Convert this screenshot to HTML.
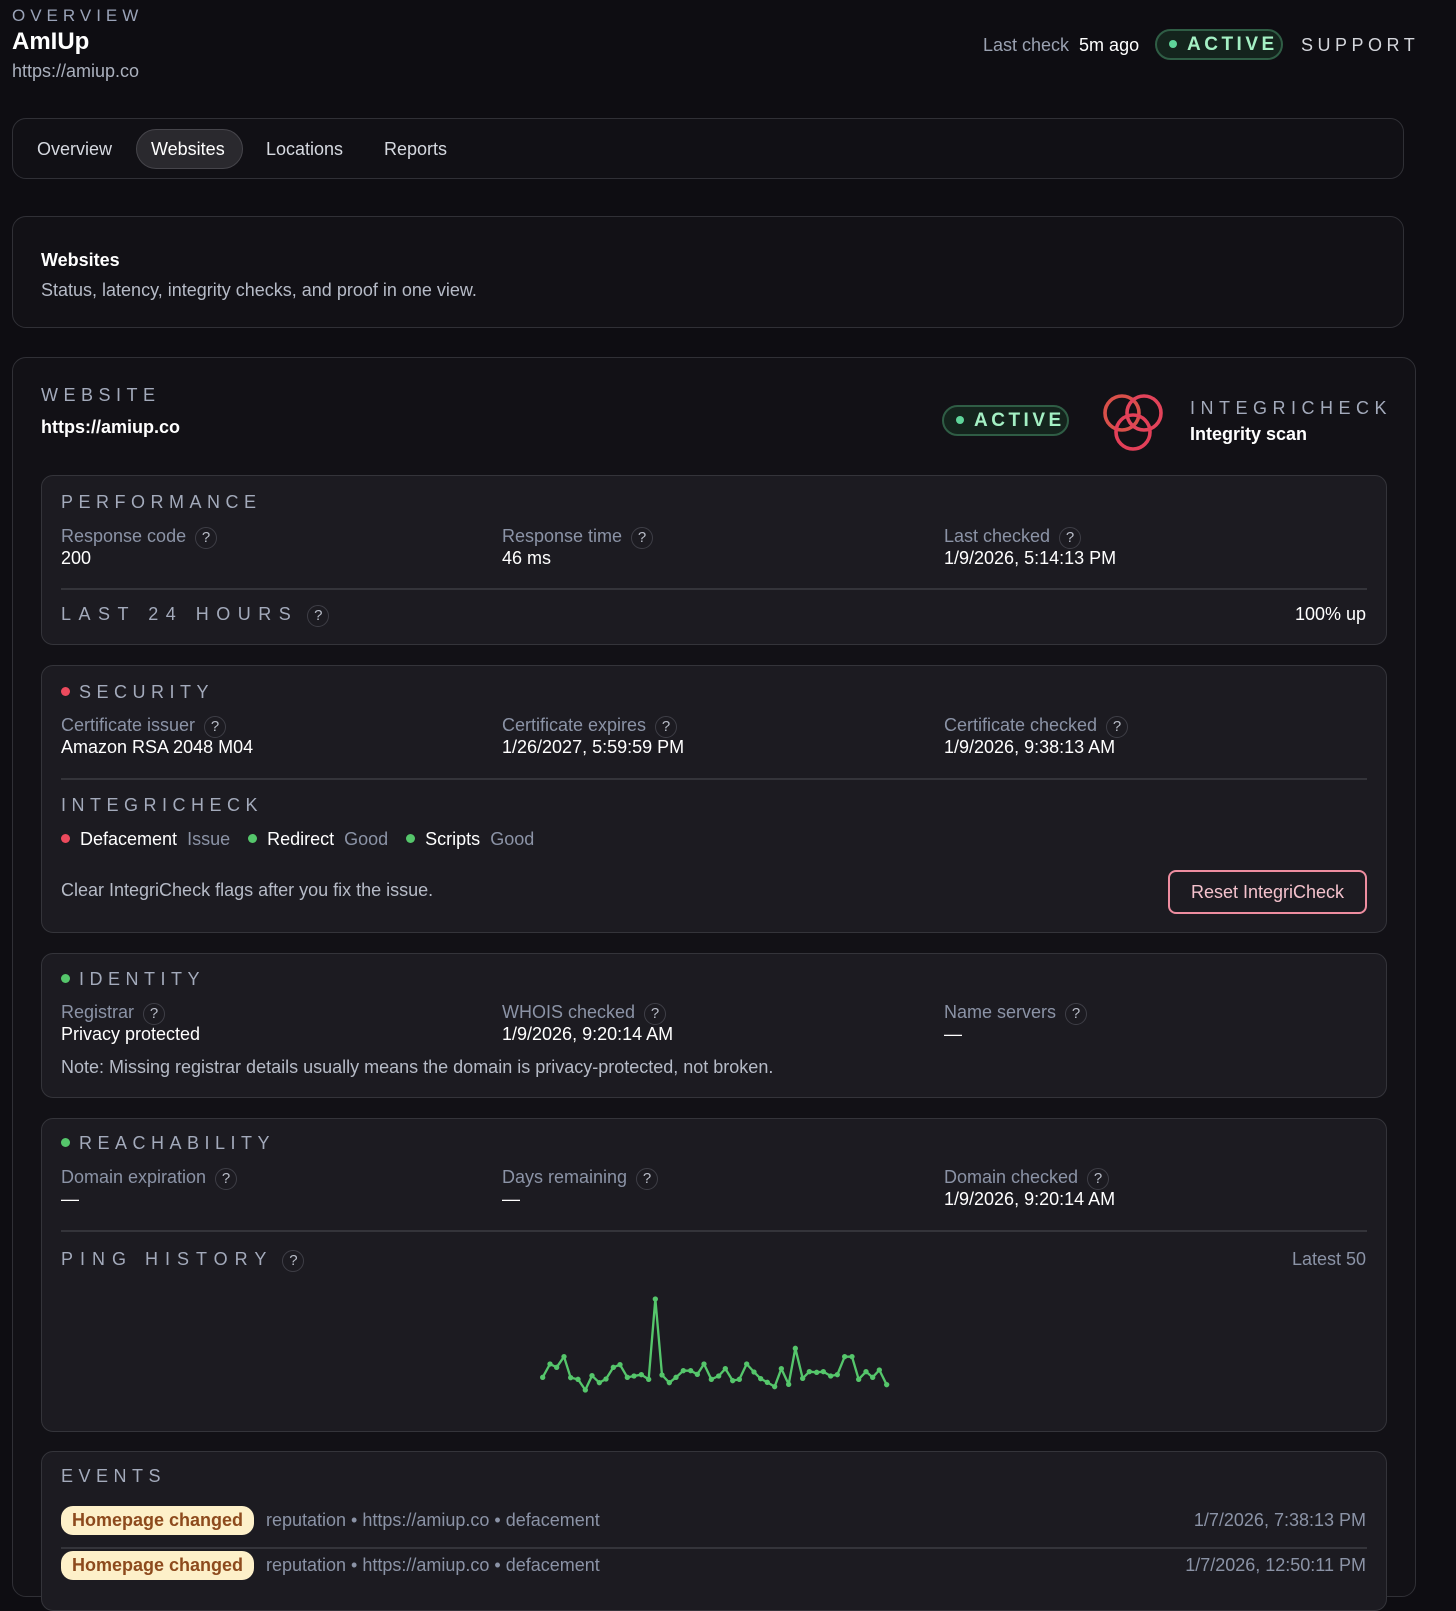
<!DOCTYPE html>
<html><head><meta charset="utf-8">
<style>
*{box-sizing:border-box;margin:0;padding:0}
body{width:1456px;height:1574px;overflow:hidden;background:#0e0d12;font-family:"Liberation Sans",sans-serif;color:#fff;position:relative}
.a{position:absolute;white-space:nowrap}
.lbl{color:#8b93a6;font-size:18px}
.val{color:#fff;font-size:18px}
.cap{color:#a3aabb;font-size:18px;letter-spacing:5.5px}
.q{display:inline-block;width:22px;height:22px;border:1.5px solid #3e3e46;border-radius:50%;color:#b9bdc8;font-size:15px;text-align:center;line-height:19px;margin-left:9px;vertical-align:0px;letter-spacing:0}
.box{position:absolute;border:1.5px solid #303036;border-radius:14px}
.sec{position:absolute;left:41px;width:1346px;background:#1c1b21;border:1.5px solid #34343a;border-radius:12px}
.hr{position:absolute;left:61px;width:1306px;height:2px;background:#34343a}
.dot{display:inline-block;width:9px;height:9px;border-radius:50%;margin-right:10px;vertical-align:2px}
.badge{position:absolute;border:2px solid #2f5d45;background:#14241d;border-radius:16px;color:#a4f0c4;font-weight:bold;font-size:19px;letter-spacing:3.5px}
.pill{position:absolute;left:61px;background:#fdf0c9;color:#8d4a1d;font-weight:bold;font-size:18px;border-radius:12px;padding:4px 11px}
</style></head><body>
<div class="a" style="left:12px;top:6px;font-size:17px;letter-spacing:5px;color:#9aa3b8">OVERVIEW</div>
<div class="a" style="left:12px;top:28px;font-size:24px;font-weight:bold">AmIUp</div>
<div class="a" style="left:12px;top:61px;font-size:18px;color:#aab0bd">https://amiup.co</div>
<div class="a" style="left:983px;top:35px;font-size:18px;color:#9aa1b1">Last check <span style="color:#fff;margin-left:5px">5m ago</span></div>
<div class="badge" style="left:1155px;top:29px;width:128px;height:31px;padding:3px 0 0 12px"><span class="dot" style="background:#5fd49a;width:8px;height:8px"></span>ACTIVE</div>
<div class="a" style="left:1301px;top:35px;font-size:18px;letter-spacing:4.5px;color:#d4d6dc">SUPPORT</div>

<div class="box" style="left:12px;top:118px;width:1392px;height:61px;background:#111015"></div>
<div class="a" style="left:136px;top:129px;width:107px;height:40px;background:#2a292e;border:1.5px solid #46454b;border-radius:20px"></div>
<div class="a" style="left:37px;top:139px;font-size:18px;color:#d6d9e0">Overview</div>
<div class="a" style="left:151px;top:139px;font-size:18px;color:#fff">Websites</div>
<div class="a" style="left:266px;top:139px;font-size:18px;color:#d6d9e0">Locations</div>
<div class="a" style="left:384px;top:139px;font-size:18px;color:#d6d9e0">Reports</div>

<div class="box" style="left:12px;top:216px;width:1392px;height:112px;background:#121116"></div>
<div class="a" style="left:41px;top:250px;font-size:18px;font-weight:bold">Websites</div>
<div class="a" style="left:41px;top:280px;font-size:18px;color:#b6bbc7">Status, latency, integrity checks, and proof in one view.</div>

<div class="box" style="left:12px;top:357px;width:1404px;height:1240px;background:#121116"></div>
<div class="a cap" style="left:41px;top:385px;color:#a3aabb">WEBSITE</div>
<div class="a" style="left:41px;top:417px;font-size:18px;font-weight:bold">https://amiup.co</div>
<div class="badge" style="left:942px;top:405px;width:127px;height:31px;padding:3px 0 0 12px"><span class="dot" style="background:#5fd49a;width:8px;height:8px"></span>ACTIVE</div>
<svg class="a" style="left:1100px;top:392px" width="66" height="62" viewBox="0 0 66 62" fill="none" stroke-width="3.6">
<circle cx="22" cy="21" r="17" stroke="#d9504a"/><circle cx="44" cy="21" r="17" stroke="#e2435a"/><circle cx="33" cy="40" r="17" stroke="#e23f58"/></svg>
<div class="a cap" style="left:1190px;top:398px;letter-spacing:5.5px">INTEGRICHECK</div>
<div class="a" style="left:1190px;top:424px;font-size:18px;font-weight:bold">Integrity scan</div>

<div class="sec" style="top:475px;height:170px"></div>
<div class="a cap" style="left:61px;top:492px">PERFORMANCE</div>
<div class="a lbl" style="left:61px;top:526px">Response code<span class="q">?</span></div>
<div class="a val" style="left:61px;top:548px">200</div>
<div class="a lbl" style="left:502px;top:526px">Response time<span class="q">?</span></div>
<div class="a val" style="left:502px;top:548px">46 ms</div>
<div class="a lbl" style="left:944px;top:526px">Last checked<span class="q">?</span></div>
<div class="a val" style="left:944px;top:548px">1/9/2026, 5:14:13 PM</div>
<div class="hr" style="top:588px"></div>
<div class="a cap" style="left:61px;top:604px;letter-spacing:7.5px">LAST 24 HOURS<span class="q">?</span></div>
<div class="a val" style="right:90px;top:604px">100% up</div>

<div class="sec" style="top:665px;height:268px"></div>
<div class="a cap" style="left:61px;top:682px"><span class="dot" style="background:#ec4a5d;margin-right:9px"></span>SECURITY</div>
<div class="a lbl" style="left:61px;top:715px">Certificate issuer<span class="q">?</span></div>
<div class="a val" style="left:61px;top:737px">Amazon RSA 2048 M04</div>
<div class="a lbl" style="left:502px;top:715px">Certificate expires<span class="q">?</span></div>
<div class="a val" style="left:502px;top:737px">1/26/2027, 5:59:59 PM</div>
<div class="a lbl" style="left:944px;top:715px">Certificate checked<span class="q">?</span></div>
<div class="a val" style="left:944px;top:737px">1/9/2026, 9:38:13 AM</div>
<div class="hr" style="top:778px"></div>
<div class="a cap" style="left:61px;top:795px">INTEGRICHECK</div>
<div class="a val" style="left:61px;top:829px"><span class="dot" style="background:#ec4a5d"></span>Defacement <span style="color:#8b93a6;margin-left:5px">Issue</span><span class="dot" style="background:#55c66b;margin-left:18px"></span>Redirect <span style="color:#8b93a6;margin-left:5px">Good</span><span class="dot" style="background:#55c66b;margin-left:18px"></span>Scripts <span style="color:#8b93a6;margin-left:5px">Good</span></div>
<div class="a" style="left:61px;top:880px;font-size:18px;color:#b6bbc7">Clear IntegriCheck flags after you fix the issue.</div>
<div class="a" style="left:1168px;top:870px;width:199px;height:44px;border:2px solid #ee8da0;border-radius:8px;color:#f4c2cd;font-size:18px;text-align:center;line-height:40px">Reset IntegriCheck</div>

<div class="sec" style="top:953px;height:145px"></div>
<div class="a cap" style="left:61px;top:969px"><span class="dot" style="background:#55c66b;margin-right:9px"></span>IDENTITY</div>
<div class="a lbl" style="left:61px;top:1002px">Registrar<span class="q">?</span></div>
<div class="a val" style="left:61px;top:1024px">Privacy protected</div>
<div class="a lbl" style="left:502px;top:1002px">WHOIS checked<span class="q">?</span></div>
<div class="a val" style="left:502px;top:1024px">1/9/2026, 9:20:14 AM</div>
<div class="a lbl" style="left:944px;top:1002px">Name servers<span class="q">?</span></div>
<div class="a val" style="left:944px;top:1024px">—</div>
<div class="a" style="left:61px;top:1057px;font-size:18px;color:#b6bbc7">Note: Missing registrar details usually means the domain is privacy-protected, not broken.</div>

<div class="sec" style="top:1118px;height:314px"></div>
<div class="a cap" style="left:61px;top:1133px"><span class="dot" style="background:#55c66b;margin-right:9px"></span>REACHABILITY</div>
<div class="a lbl" style="left:61px;top:1167px">Domain expiration<span class="q">?</span></div>
<div class="a val" style="left:61px;top:1189px">—</div>
<div class="a lbl" style="left:502px;top:1167px">Days remaining<span class="q">?</span></div>
<div class="a val" style="left:502px;top:1189px">—</div>
<div class="a lbl" style="left:944px;top:1167px">Domain checked<span class="q">?</span></div>
<div class="a val" style="left:944px;top:1189px">1/9/2026, 9:20:14 AM</div>
<div class="hr" style="top:1230px"></div>
<div class="a cap" style="left:61px;top:1249px;letter-spacing:7px">PING HISTORY<span class="q">?</span></div>
<div class="a lbl" style="right:90px;top:1249px">Latest 50</div>
<svg class="a" style="left:520px;top:1280px" width="380" height="120" viewBox="0 0 1140 360">
<polyline fill="none" stroke="#55c66b" stroke-width="7" stroke-linejoin="round" points="68,292 90,252 110,262 132,230 152,293 174,298 196,330 216,287 238,308 258,297 280,262 300,254 322,292 342,288 364,284 386,298 406,57 426,285 448,308 468,292 490,272 512,272 532,283 552,252 574,298 596,288 616,266 638,302 658,298 680,252 702,276 722,296 742,307 764,320 784,266 806,313 826,205 848,295 868,275 890,277 910,275 932,288 952,284 974,230 996,230 1016,298 1038,275 1058,292 1078,270 1100,314"/>
<g fill="#55c66b">
<circle cx="68" cy="292" r="8"/><circle cx="90" cy="252" r="8"/><circle cx="110" cy="262" r="8"/><circle cx="132" cy="230" r="8"/><circle cx="152" cy="293" r="8"/><circle cx="174" cy="298" r="8"/><circle cx="196" cy="330" r="8"/><circle cx="216" cy="287" r="8"/><circle cx="238" cy="308" r="8"/><circle cx="258" cy="297" r="8"/><circle cx="280" cy="262" r="8"/><circle cx="300" cy="254" r="8"/><circle cx="322" cy="292" r="8"/><circle cx="342" cy="288" r="8"/><circle cx="364" cy="284" r="8"/><circle cx="386" cy="298" r="8"/><circle cx="406" cy="57" r="8"/><circle cx="426" cy="285" r="8"/><circle cx="448" cy="308" r="8"/><circle cx="468" cy="292" r="8"/><circle cx="490" cy="272" r="8"/><circle cx="512" cy="272" r="8"/><circle cx="532" cy="283" r="8"/><circle cx="552" cy="252" r="8"/><circle cx="574" cy="298" r="8"/><circle cx="596" cy="288" r="8"/><circle cx="616" cy="266" r="8"/><circle cx="638" cy="302" r="8"/><circle cx="658" cy="298" r="8"/><circle cx="680" cy="252" r="8"/><circle cx="702" cy="276" r="8"/><circle cx="722" cy="296" r="8"/><circle cx="742" cy="307" r="8"/><circle cx="764" cy="320" r="8"/><circle cx="784" cy="266" r="8"/><circle cx="806" cy="313" r="8"/><circle cx="826" cy="205" r="8"/><circle cx="848" cy="295" r="8"/><circle cx="868" cy="275" r="8"/><circle cx="890" cy="277" r="8"/><circle cx="910" cy="275" r="8"/><circle cx="932" cy="288" r="8"/><circle cx="952" cy="284" r="8"/><circle cx="974" cy="230" r="8"/><circle cx="996" cy="230" r="8"/><circle cx="1016" cy="298" r="8"/><circle cx="1038" cy="275" r="8"/><circle cx="1058" cy="292" r="8"/><circle cx="1078" cy="270" r="8"/><circle cx="1100" cy="314" r="8"/>
</g></svg>

<div class="sec" style="top:1451px;height:160px"></div>
<div class="a cap" style="left:61px;top:1466px">EVENTS</div>
<div class="pill" style="top:1506px">Homepage changed</div>
<div class="a lbl" style="left:266px;top:1510px">reputation • https://amiup.co • defacement</div>
<div class="a lbl" style="right:90px;top:1510px">1/7/2026, 7:38:13 PM</div>
<div class="hr" style="top:1547px"></div>
<div class="pill" style="top:1551px">Homepage changed</div>
<div class="a lbl" style="left:266px;top:1555px">reputation • https://amiup.co • defacement</div>
<div class="a lbl" style="right:90px;top:1555px">1/7/2026, 12:50:11 PM</div>
</body></html>
